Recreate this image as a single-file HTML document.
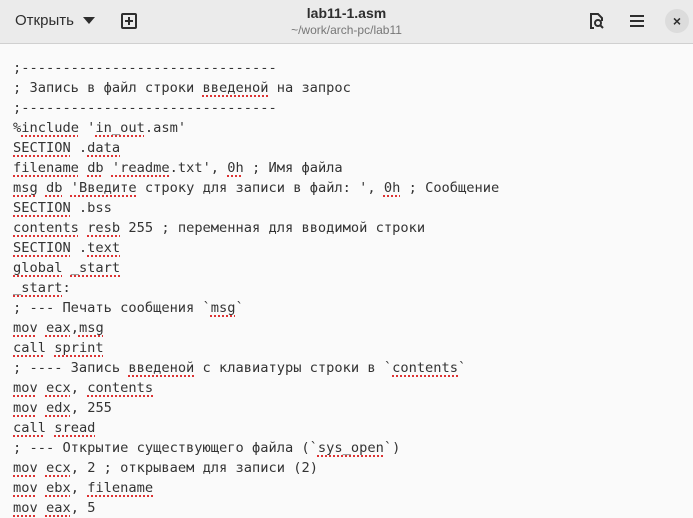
<!DOCTYPE html>
<html><head><meta charset="utf-8"><style>
body{margin:0;width:693px;height:507px;overflow:hidden;background:#fafafa;font-family:"Liberation Sans","DejaVu Sans",sans-serif;}
.hdr{position:absolute;left:0;top:0;width:693px;height:43px;background:#ebebeb;border-bottom:1px solid #d0d0d0;}
.open{position:absolute;left:15px;top:12px;font-size:15px;color:#2e2e2e;}
.tri{position:absolute;left:83px;top:17px;width:0;height:0;border-left:6px solid transparent;border-right:6px solid transparent;border-top:7px solid #2e2e2e;}
.plus{position:absolute;left:121px;top:13px;width:12px;height:12px;border:2px solid #2e2e2e;border-radius:2px;}
.plus:before{content:"";position:absolute;left:5px;top:2px;width:2px;height:8px;background:#2e2e2e}
.plus:after{content:"";position:absolute;left:2px;top:5px;width:8px;height:2px;background:#2e2e2e}
.title{position:absolute;left:0;width:693px;text-align:center;top:5px;font-size:14px;font-weight:bold;color:#2e2e2e;}
.sub{position:absolute;left:0;width:693px;text-align:center;top:23px;font-size:12px;color:#777;}
.close{position:absolute;left:665px;top:9px;width:24px;height:24px;border-radius:50%;background:#dcdcdc;text-align:center;line-height:24px;font-size:14px;font-weight:bold;color:#2e2e2e;}
.code{position:absolute;left:13px;top:58px;font-family:"DejaVu Sans Mono",monospace;font-size:13.7px;line-height:20px;color:#333;white-space:pre;}
u{text-decoration:underline dotted #d33;text-decoration-thickness:1.5px;text-underline-offset:3px;}
</style></head><body>
<div class="hdr">
<div class="open">Открыть</div><div class="tri"></div>
<div class="plus"></div>
<div class="title">lab11-1.asm</div>
<div class="sub">~/work/arch-pc/lab11</div>
<svg style="position:absolute;left:589px;top:13px" width="16" height="16" viewBox="0 0 16 16" fill="none" stroke="#2e2e2e" stroke-width="2"><path d="M5 15H2V1h7l4 4v3"/><circle cx="9" cy="10" r="3"/><path d="M11 12l3 3"/></svg>
<svg style="position:absolute;left:629px;top:14px" width="16" height="14" viewBox="0 0 16 14" stroke="#2e2e2e" stroke-width="2"><path d="M1 2h14M1 7h14M1 12h14"/></svg>
<div class="close">×</div>
</div>
<div class="code">;-------------------------------
; Запись в файл строки <u>введеной</u> на запрос
;-------------------------------
%<u>include</u> '<u>in_out</u>.asm'
<u>SECTION</u> .<u>data</u>
<u>filename</u> <u>db</u> <u>'readme</u>.txt', <u>0h</u> ; Имя файла
<u>msg</u> <u>db</u> <u>'Введите</u> строку для записи в файл: ', <u>0h</u> ; Сообщение
<u>SECTION</u> .bss
<u>contents</u> <u>resb</u> 255 ; переменная для вводимой строки
<u>SECTION</u> .<u>text</u>
<u>global</u> <u>_start</u>
<u>_start</u>:
; --- Печать сообщения `<u>msg</u>`
<u>mov</u> <u>eax</u>,<u>msg</u>
<u>call</u> <u>sprint</u>
; ---- Запись <u>введеной</u> с клавиатуры строки в `<u>contents</u>`
<u>mov</u> <u>ecx</u>, <u>contents</u>
<u>mov</u> <u>edx</u>, 255
<u>call</u> <u>sread</u>
; --- Открытие существующего файла (`<u>sys_open</u>`)
<u>mov</u> <u>ecx</u>, 2 ; открываем для записи (2)
<u>mov</u> <u>ebx</u>, <u>filename</u>
<u>mov</u> <u>eax</u>, 5</div>
</body></html>
